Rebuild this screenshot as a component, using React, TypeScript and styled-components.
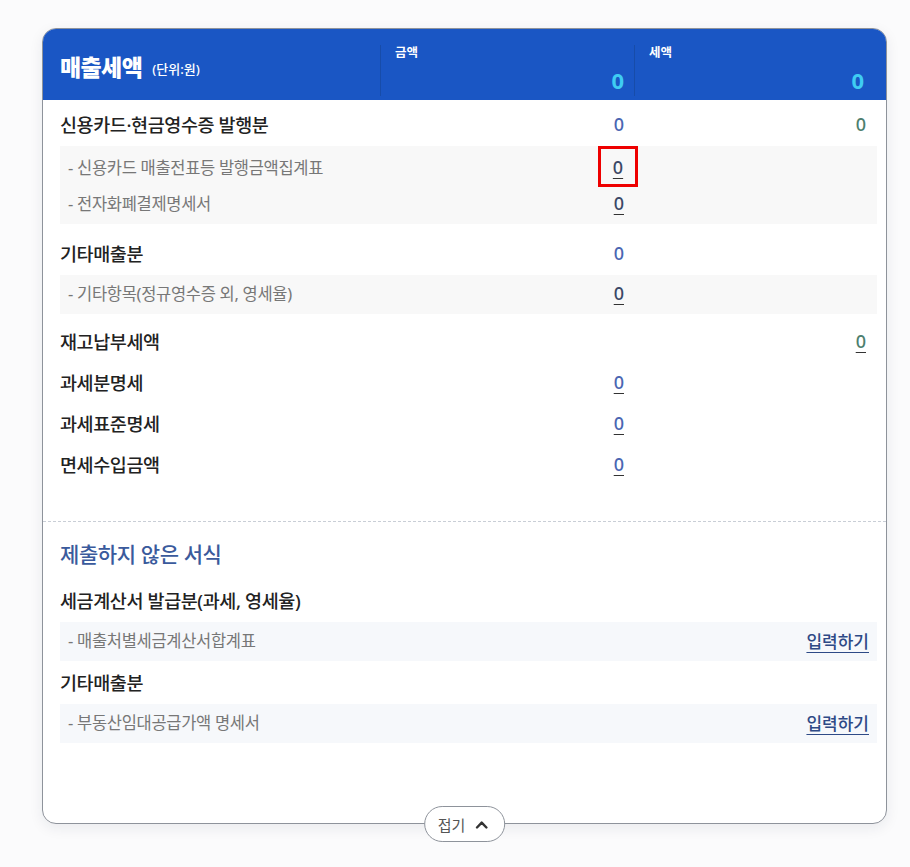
import styled, { createGlobalStyle } from "styled-components";

const GlobalStyle = createGlobalStyle`
  body {
    margin: 0;
    background: #fbfbfc;
    font-family: "Noto Sans", "Noto Sans CJK KR", sans-serif;
  }
`;

const Page = styled.div`
  padding: 28px 0 40px 42px;
`;

const Card = styled.section`
  position: relative;
  width: 843px;
  border: 1px solid #8e939b;
  border-radius: 14px;
  background: #fff;
  box-shadow: 0 4px 14px rgba(30, 40, 60, 0.08);
`;

const Header = styled.header`
  display: grid;
  grid-template-columns: 337px 254px 1fr;
  height: 71px;
  background: #1a56c4;
  border-radius: 13px 13px 0 0;
  color: #fff;
`;

const TitleCell = styled.div`
  display: flex;
  align-items: center;
  padding: 2px 0 0 17px;
  gap: 10px;
`;

const Title = styled.h2`
  margin: 0;
  font-size: 23px;
  font-weight: 800;
  letter-spacing: -0.6px;
`;

const Unit = styled.span`
  font-size: 13px;
  font-weight: 500;
  padding-top: 5px;
`;

const SumCell = styled.div<{ $right: number }>`
  display: flex;
  flex-direction: column;
  justify-content: space-between;
  margin: 16px 0 4px 0;
  padding: 0 ${(p) => p.$right}px 0 14px;
  border-left: 1px solid #174ca9;
`;

const SumLabel = styled.span`
  font-size: 12.5px;
  font-weight: 700;
  line-height: 16px;
  margin-top: 0;
`;

const SumValue = styled.span`
  align-self: flex-end;
  font-size: 22px;
  font-weight: 700;
  color: #3fcdf2;
  line-height: 26px;
  margin-bottom: 3px;
`;

const Section = styled.div<{ $dashed?: boolean }>`
  padding: ${(p) => (p.$dashed ? "10px 0 80px" : "3px 0 37px")};
  border-top: ${(p) => (p.$dashed ? "1px dashed #c9ced6" : "none")};
`;

const Row = styled.div`
  display: grid;
  grid-template-columns: 337px 254px 1fr;
  align-items: center;
  height: 41px;
`;

const Label = styled.span<{ $accent?: boolean }>`
  padding-left: 17px;
  font-size: ${(p) => (p.$accent ? "21px" : "18.5px")};
  font-weight: 500;
  color: ${(p) => (p.$accent ? "#3a5a9c" : "#222")};
  letter-spacing: -0.4px;
  white-space: nowrap;
`;

const SubGroup = styled.div<{ $tone?: "gray" | "blue"; $after?: number }>`
  margin: 2px 9px ${(p) => p.$after ?? 8}px 17px;
  background: ${(p) => (p.$tone === "blue" ? "#f6f8fb" : "#f8f8f8")};
`;

const SubRow = styled.div`
  box-sizing: border-box;
  display: grid;
  grid-template-columns: 320px 254px 1fr;
  align-items: center;
  height: 39px;
  padding-bottom: 3px;
`;

const SubLabel = styled.span`
  padding-left: 8px;
  font-size: 16.5px;
  color: #777;
  letter-spacing: -0.3px;
  white-space: nowrap;
`;

const Amount = styled.span<{ $link?: boolean; $tone?: "blue" | "dark" | "green" }>`
  justify-self: end;
  margin-right: ${(p) => (p.$tone === "green" ? "20px" : "10px")};
  font-size: 18px;
  font-weight: 500;
  color: ${(p) =>
    p.$tone === "green" ? "#4d7f6e" : p.$tone === "dark" ? "#3b4866" : "#4a66b2"};
  text-decoration: ${(p) => (p.$link ? "underline" : "none")};
  text-underline-offset: 4px;
  text-decoration-thickness: 1px;
  text-decoration-color: #333;
`;

const Highlight = styled.span`
  justify-self: end;
  margin-right: -4px;
  display: flex;
  align-items: center;
  justify-content: center;
  width: 34px;
  height: 35px;
  border: 3px solid #ee0000;
`;

const InputLink = styled.a`
  grid-column: 3;
  justify-self: end;
  margin-right: 8px;
  font-size: 17px;
  font-weight: 500;
  color: #2e4a86;
  text-decoration: underline;
  text-underline-offset: 4px;
  cursor: pointer;
`;

const FoldButton = styled.button`
  position: absolute;
  left: 50%;
  bottom: -19px;
  transform: translateX(-50%);
  display: flex;
  align-items: center;
  gap: 10px;
  height: 36px;
  padding: 0 16px 0 13px;
  border: 1px solid #8e939b;
  border-radius: 18px;
  background: #fff;
  font-family: "Noto Sans CJK KR", sans-serif;
  font-size: 15px;
  color: #555;
  cursor: pointer;
`;

const Chevron = () => (
  <svg width="13" height="9" viewBox="0 0 13 9" fill="none">
    <path d="M1.8 7.5 6.5 2.6l4.7 4.9" stroke="#333" strokeWidth="2.4" strokeLinecap="round" strokeLinejoin="round" />
  </svg>
);

export default function App() {
  return (
    <Page>
      <GlobalStyle />
      <Card>
        <Header>
          <TitleCell>
            <Title>매출세액</Title>
            <Unit>(단위:원)</Unit>
          </TitleCell>
          <SumCell $right={10}>
            <SumLabel>금액</SumLabel>
            <SumValue>0</SumValue>
          </SumCell>
          <SumCell $right={22}>
            <SumLabel>세액</SumLabel>
            <SumValue>0</SumValue>
          </SumCell>
        </Header>

        <Section>
          <Row>
            <Label>신용카드·현금영수증 발행분</Label>
            <Amount>0</Amount>
            <Amount $tone="green">0</Amount>
          </Row>
          <SubGroup>
            <SubRow>
              <SubLabel>- 신용카드 매출전표등 발행금액집계표</SubLabel>
              <Highlight>
                <Amount $link $tone="dark" style={{ marginRight: 0 }}>0</Amount>
              </Highlight>
            </SubRow>
            <SubRow>
              <SubLabel>- 전자화폐결제명세서</SubLabel>
              <Amount $link $tone="dark">0</Amount>
            </SubRow>
          </SubGroup>
          <Row>
            <Label>기타매출분</Label>
            <Amount>0</Amount>
          </Row>
          <SubGroup $after={6}>
            <SubRow>
              <SubLabel>- 기타항목(정규영수증 외, 영세율)</SubLabel>
              <Amount $link $tone="dark">0</Amount>
            </SubRow>
          </SubGroup>
          <Row>
            <Label>재고납부세액</Label>
            <span />
            <Amount $link $tone="green">0</Amount>
          </Row>
          <Row>
            <Label>과세분명세</Label>
            <Amount $link>0</Amount>
          </Row>
          <Row>
            <Label>과세표준명세</Label>
            <Amount $link>0</Amount>
          </Row>
          <Row>
            <Label>면세수입금액</Label>
            <Amount $link>0</Amount>
          </Row>
        </Section>

        <Section $dashed>
          <Row>
            <Label $accent>제출하지 않은 서식</Label>
          </Row>
          <Row style={{ marginTop: 6 }}>
            <Label>세금계산서 발급분(과세, 영세율)</Label>
          </Row>
          <SubGroup $tone="blue" $after={0}>
            <SubRow>
              <SubLabel>- 매출처별세금계산서합계표</SubLabel>
              <InputLink>입력하기</InputLink>
            </SubRow>
          </SubGroup>
          <Row>
            <Label>기타매출분</Label>
          </Row>
          <SubGroup $tone="blue" $after={0}>
            <SubRow>
              <SubLabel>- 부동산임대공급가액 명세서</SubLabel>
              <InputLink>입력하기</InputLink>
            </SubRow>
          </SubGroup>
        </Section>

        <FoldButton>
          접기
          <Chevron />
        </FoldButton>
      </Card>
    </Page>
  );
}
